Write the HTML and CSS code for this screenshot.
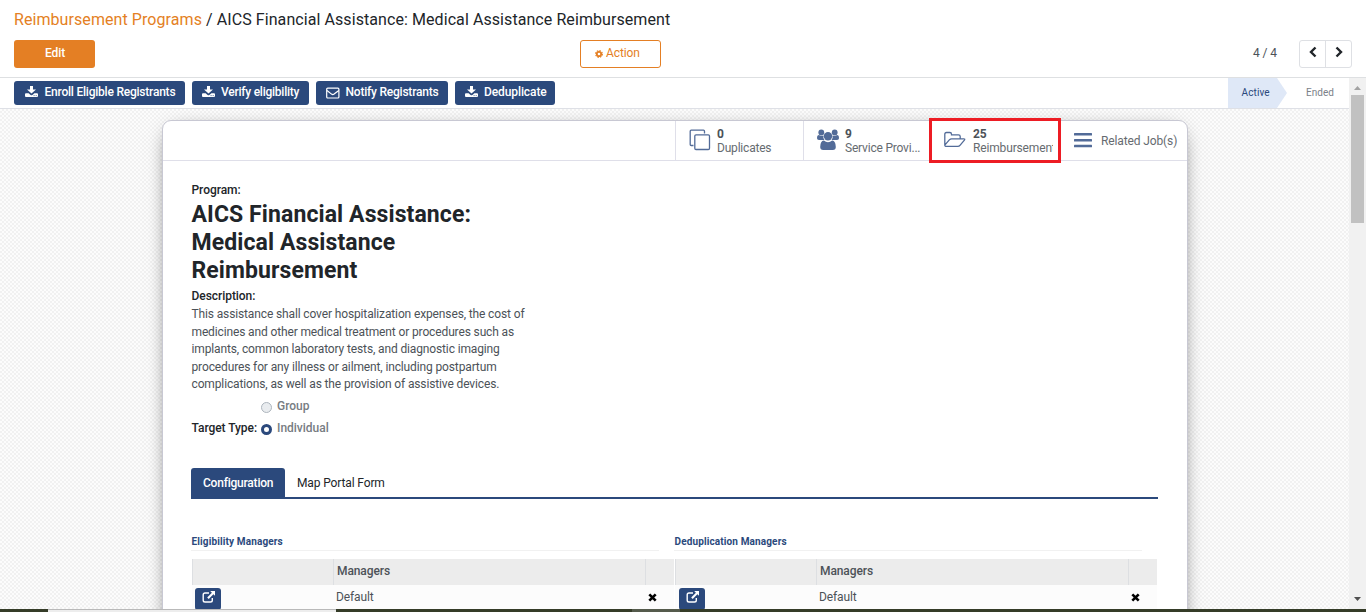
FILE: index.html
```
<!DOCTYPE html>
<html lang="en">
<head>
<meta charset="utf-8">
<title>Reimbursement Programs</title>
<link rel="stylesheet" href="styles.css">
</head>
<body>
<svg class="defs" width="0" height="0">
  <symbol id="download" viewBox="0 0 13 12"><path d="M5 0h3v3.500h3L6.500 7.600 2 3.500h3zM1 7.200h2.600l2 1.700q.9.700 1.800 0l2-1.700H12q1 0 1 1V10q0 1-1 1H1q-1 0-1-1V8.200q0-1 1-1z" fill="currentColor"/><path d="M8.600 9.600h1M10.700 9.600h1" stroke="#2b497c" stroke-width=".8"/></symbol>
  <symbol id="envelope" viewBox="0 0 14 12"><rect x=".7" y="1.200" width="12.200" height="9.800" rx="1" fill="none" stroke="currentColor" stroke-width="1.200"/><path d="M1 3.500l4.500 3.600q1.300.9 2.600 0L12.800 3.500" fill="none" stroke="currentColor" stroke-width="1.200"/></symbol>
  <symbol id="external" viewBox="0 0 14 12"><path d="M7 2H3q-1.800 0-1.800 1.800v5.400Q1.200 11 3 11h5.500q1.800 0 1.800-1.800V7" fill="none" stroke="currentColor" stroke-width="1.400"/><path d="M8.200 0H13v4.800l-1.600-1.600-4.700 4.700-1.500-1.500 4.700-4.700z" fill="currentColor"/></symbol>
  <symbol id="cross" viewBox="0 0 9 9"><path d="M1.300 1.300l6.400 6.400M7.700 1.300L1.300 7.700" stroke="currentColor" stroke-width="2.600"/></symbol>
</svg>
<header class="control-panel">
  <div class="breadcrumb"><a>Reimbursement Programs</a> <span>/ AICS Financial Assistance: Medical Assistance Reimbursement</span></div>
  <div class="controls">
    <button class="btn edit">Edit</button>
    <button class="btn action"><svg width="8" height="8" viewBox="0 0 8 8"><circle cx="4" cy="4" r="2.200" fill="none" stroke="currentColor" stroke-width="1.800"/><circle cx="4" cy="4" r="3.400" fill="none" stroke="currentColor" stroke-width="1.100" stroke-dasharray="1.500 1.170"/></svg><span>Action</span></button>
    <div class="pager"><span class="count">4 / 4</span><div class="arrows"><i><svg width="8" height="12" viewBox="0 0 8 12"><path d="M6.500 1.500L2 6l4.500 4.500" fill="none" stroke="currentColor" stroke-width="2.400"/></svg></i><i><svg width="8" height="12" viewBox="0 0 8 12"><path d="M1.500 1.500L6 6l-4.500 4.500" fill="none" stroke="currentColor" stroke-width="2.400"/></svg></i></div></div>
  </div>
</header>
<main class="viewport">
  <section class="content">
    <div class="statusbar">
      <button class="tool enroll"><svg width="13" height="12"><use href="#download"/></svg><span>Enroll Eligible Registrants</span></button>
      <button class="tool verify"><svg width="13" height="12"><use href="#download"/></svg><span>Verify eligibility</span></button>
      <button class="tool notify"><svg width="14" height="12"><use href="#envelope"/></svg><span>Notify Registrants</span></button>
      <button class="tool dedupe"><svg width="13" height="12"><use href="#download"/></svg><span>Deduplicate</span></button>
      <div class="stages"><span class="stage active">Active</span><span class="stage ended">Ended</span></div>
    </div>
    <div class="canvas">
      <article class="sheet">
        <div class="stats">
          <div class="stat"><svg width="22" height="22" viewBox="0 0 22 22"><path d="M4.500 16.500H2.200Q1.200 16.500 1.200 15.500V2.200Q1.200 1.200 2.200 1.200H14.500Q15.500 1.200 15.500 2.200V4.500" fill="none" stroke="currentColor" stroke-width="1.300"/><rect x="5.800" y="5.800" width="14.700" height="14.700" rx="1.200" fill="none" stroke="currentColor" stroke-width="1.300"/></svg><div class="stat-text"><b>0</b><span class="dup">Duplicates</span></div></div>
          <div class="stat"><svg width="22" height="22" viewBox="0 0 22 22" fill="currentColor"><circle cx="4.300" cy="3.500" r="2.900"/><circle cx="17.700" cy="3.500" r="2.900"/><path d="M2 6q2.300 1.700 4.500.5Q5.800 9 7.500 11H2Q0 11 0 9.200Q0 6 2 6zM20 6q-2.300 1.700-4.500.5Q16.200 9 14.500 11H20q2 0 2-1.800Q22 6 20 6z"/><circle cx="11" cy="7.300" r="4.200"/><path d="M6.800 11.400q4.200 3.600 8.400 0 3.600.5 3.600 6.600 0 3-3 3H6.200q-3 0-3-3 0-6.100 3.600-6.600z"/></svg><div class="stat-text"><b>9</b><span class="prov">Service Provi...</span></div></div>
          <div class="stat"><svg width="23" height="22" viewBox="0 0 23 22" fill="none" stroke="currentColor" stroke-width="1.300"><path d="M1.800 16V5.200q0-1.700 1.700-1.700h3.300q1.700 0 1.700 1.700v.6h7q1.700 0 1.700 1.700v2.300M1.800 16.200l4.500-5.300q1-1.100 2.400-1.100h12q1.700 0 .7 1.300l-4.200 5q-1 1.300-2.500 1.300H3.400q-1.600 0-1.600-1.500"/></svg><div class="stat-text"><b>25</b><span class="reimb">Reimbursement</span></div></div>
          <div class="stat jobs"><svg width="18" height="16" viewBox="0 0 18 16" fill="currentColor"><rect y="1" width="18" height="2.400" rx=".5"/><rect y="7" width="18" height="2.400" rx=".5"/><rect y="12.800" width="18" height="2.400" rx=".5"/></svg><span class="joblabel">Related Job(s)</span></div>
          <div class="highlight"></div>
        </div>
        <div class="form">
          <div class="label">Program:</div>
          <h1>AICS Financial Assistance:<br>Medical Assistance<br>Reimbursement</h1>
          <div class="label desc-label">Description:</div>
          <p class="desc"><span>This assistance shall cover hospitalization expenses, the cost of</span><br><span>medicines and other medical treatment or procedures such as</span><br><span>implants, common laboratory tests, and diagnostic imaging</span><br><span>procedures for any illness or ailment, including postpartum</span><br><span>complications, as well as the provision of assistive devices.</span></p>
          <div class="target"><span class="label target-label">Target Type:</span><div class="radios"><div class="radio"><i></i><span>Group</span></div><div class="radio on"><i></i><span>Individual</span></div></div></div>
          <nav class="tabs"><a class="tab current">Configuration</a><a class="tab map">Map Portal Form</a></nav>
          <div class="groups">
            <section class="group">
              <h2>Eligibility Managers</h2>
              <div class="grid head"><span></span><span>Managers</span><span></span></div>
              <div class="grid row"><span><i class="open"><svg width="14" height="12"><use href="#external"/></svg></i></span><span>Default</span><span><svg class="x" width="9" height="9"><use href="#cross"/></svg></span></div>
            </section>
            <section class="group second">
              <h2>Deduplication Managers</h2>
              <div class="grid head"><span></span><span>Managers</span><span></span></div>
              <div class="grid row"><span><i class="open"><svg width="14" height="12"><use href="#external"/></svg></i></span><span>Default</span><span><svg class="x" width="9" height="9"><use href="#cross"/></svg></span></div>
            </section>
          </div>
        </div>
      </article>
    </div>
  </section>
  <aside class="scrollbar"><svg width="9" height="5" viewBox="0 0 9 5"><path d="M1 5h7L4.500 1z" fill="#a3a3a3"/></svg><div class="thumb"></div><svg class="down" width="9" height="5" viewBox="0 0 9 5"><path d="M1 0h7L4.500 4z" fill="#505050"/></svg></aside>
</main>
<footer class="edge"><i class="dark start"></i><i class="light"></i><i class="dark mid"></i><i class="soft"></i><i class="dark rest"></i></footer>
</body>
</html>
```
FILE: styles.css
```
* { box-sizing: border-box; }
body { margin: 0; width: 1366px; height: 612px; overflow: hidden; display: flex; flex-direction: column; background: #fff; font-family: Roboto, "Liberation Sans", sans-serif; font-size: 12px; color: #4c5258; white-space: nowrap; }
svg { display: block; flex: none; }
.defs { position: absolute; }
i { display: block; font-style: normal; }
button { font: inherit; border: 0; padding: 0; }
.control-panel { height: 78px; flex: none; border-bottom: 1px solid #dee0e2; padding: 0 14px; }
.breadcrumb { height: 40px; line-height: 40px; font-size: 16px; letter-spacing: .075px; color: #212529; }
.breadcrumb a { color: #e47f24; }
.controls { display: grid; grid-template-columns: 566px 1fr auto; align-items: start; }
.btn { width: 81px; height: 28px; border-radius: 3px; line-height: 26px; }
.edit { background: #e47f24; color: #fff; font-weight: 500; padding: 0 0 2px 1px; letter-spacing: -.1px; }
.action { display: flex; align-items: center; background: #fff; color: #e47f24; border: 1px solid #e47f24; padding-left: 14px; gap: 3px; line-height: 24px; padding-bottom: 2px; letter-spacing: -.1px; }
.action svg { margin-top: 2px; }
.pager { display: flex; align-items: center; height: 28px; }
.count { width: 46px; line-height: 26px; font-size: 12px; padding-bottom: 2px; letter-spacing: -.1px; }
.arrows { display: grid; grid-template-columns: 25px 26px; height: 28px; border: 1px solid #dee0e4; border-radius: 3px; color: #212529; width: 53px; }
.arrows i { display: flex; justify-content: center; padding: 5px 0 0 1px; }
.arrows i + i { border-left: 1px solid #dee0e4; padding-left: 0; }
.viewport { height: 531px; flex: none; display: flex; }
.content { width: 1349px; display: flex; flex-direction: column; }
.statusbar { height: 31px; flex: none; border-bottom: 1px solid #dee0e6; display: flex; gap: 7px; padding: 3px 0 0 14px; }
.tool { height: 24px; background: #2b497c; border-radius: 3px; color: #fff; font-weight: 500; display: flex; align-items: center; gap: 7px; padding: 0 0 3px 10px; letter-spacing: -.22px; }
.enroll { width: 171px; padding-left: 10.500px; }
.verify { width: 117px; gap: 6px; letter-spacing: -.24px; }
.notify { width: 132px; }
.notify svg { margin-top: 2px; }
.notify span { margin-left: -1.500px; }
.dedupe { width: 100px; gap: 6px; letter-spacing: -.1px; }
.stages { margin: -3px 0 0 auto; display: flex; height: 30px; line-height: 29px; font-size: 10px; }
.active { width: 59px; padding-left: 13.500px; background: #dfe8f7; color: #2b497c; font-weight: 400; letter-spacing: .12px; clip-path: polygon(0 0, 49px 0, 100% 50%, 49px 100%, 0 100%); }
.ended { width: 62px; padding-left: 19px; color: #7c8189; letter-spacing: .05px; }
.canvas { flex: 1; min-height: 0; overflow: hidden; padding: 11px 0 0 162px; background: repeating-conic-gradient(#f1f1f1 0 25%, #fcfcfc 0 50%) 0 0 / 4px 4px; }
.sheet { width: 1026px; height: 600px; background: #fff; border: 1px solid #c8c8d3; border-radius: 9px; box-shadow: 0 5px 20px -10px #000; }
.stats { position: relative; height: 40px; border-bottom: 1px solid #dfdfe9; padding-left: 512px; display: grid; grid-template-columns: 128px 128px 129px 1fr; }
.stat { border-left: 1px solid #dfdfe9; padding-left: 12.500px; display: flex; align-items: center; gap: 6.500px; color: #526b98; }
.stat svg { margin-top: -2px; }
.stat-text { color: #666b70; line-height: 14px; padding-top: 1px; flex: none; letter-spacing: -.2px; }
.stat-text b { display: block; font-weight: 700; color: #4c5258; }
.reimb { display: block; width: 80px; overflow: hidden; letter-spacing: -.15px; }
.stat:nth-child(3) { gap: 7px; padding-left: 11px; }
.jobs { border: 0; gap: 9px; padding-left: 14px; }
.joblabel { color: #666b70; letter-spacing: -.12px; }
.highlight { position: absolute; left: 766px; top: -3px; width: 132px; height: 45px; border: 3px solid #ed1c24; }
.form { padding: 21px 0 0 28.500px; }
.label { color: #212529; font-weight: 500; height: 18px; line-height: 16px; letter-spacing: -.05px; }
h1 { margin: 0; font-size: 23px; line-height: 28px; padding-top: 1px; font-weight: 700; color: #212529; letter-spacing: .1px; }
.desc-label { margin-top: 3px; }
.desc { margin: 0; line-height: 17.600px; height: 90px; letter-spacing: -.132px; }
.target { display: flex; align-items: flex-end; height: 43px; }
.target-label { width: 69.500px; line-height: 18px; margin-bottom: 2px; }
.radio { display: flex; align-items: center; gap: 5px; height: 22px; font-weight: 500; color: #777c82; letter-spacing: -.02px; }
.radio i { width: 11px; height: 11px; border-radius: 50%; background: #e9ecef; border: 1px solid #adb5bd; margin-top: 2px; }
.radio.on i { border: 3.500px solid #2b497c; background: #fff; }
.tabs { margin: 29px 0 0 -.5px; height: 31px; width: 967px; border-bottom: 2px solid #2b497c; display: flex; line-height: 30px; color: #212529; }
.tab { padding-left: 12px; letter-spacing: -.13px; }
.current { width: 94px; background: #2b497c; color: #fff; border-radius: 3px 3px 0 0; font-weight: 500; letter-spacing: -.22px; }
.groups { display: grid; grid-template-columns: 483px 483px; padding-top: 36px; margin-left: -.5px; }
h2 { margin: 0 15px 8px 0; padding-left: .5px; height: 16px; line-height: 14px; border-bottom: 1px solid #f1f1f1; font-size: 10px; font-weight: 700; color: #2b497c; letter-spacing: .13px; }
.grid { display: grid; grid-template-columns: 141px 312px 28px; margin-left: 1px; }
.head { height: 26px; line-height: 24px; background: #ececec; font-weight: 500; letter-spacing: -.1px; }
.head span { border-left: 1px solid #dddfe2; padding-left: 3px; }
.row { height: 40px; line-height: 24px; background: #fcfcfc; letter-spacing: -.1px; }
.row span { padding-left: 3px; }
.row .x { color: #000; margin: 8px 0 0; }
.open { width: 26px; height: 22px; margin-top: 3px; border-radius: 3px; background: #2b497c; color: #fff; padding: 3px 0 0 7px; }
.second .open { margin-left: 1px; }
.scrollbar { width: 17px; background: #f1f1f1; display: flex; flex-direction: column; align-items: center; padding-top: 7px; }
.thumb { width: 13px; height: 128px; background: #c1c1c1; margin-top: 5px; }
.down { margin-top: auto; margin-bottom: 7px; }
.edge { height: 3px; flex: none; display: flex; }
.edge i { height: 3px; }
.dark { background: #353c28; }
.start { width: 48px; }
.light { width: 288px; background: #ededed; border-top: 1px solid #b9b9b9; }
.mid { width: 296px; }
.soft { width: 48px; background: #555b4c; }
.rest { flex: 1; }
```
